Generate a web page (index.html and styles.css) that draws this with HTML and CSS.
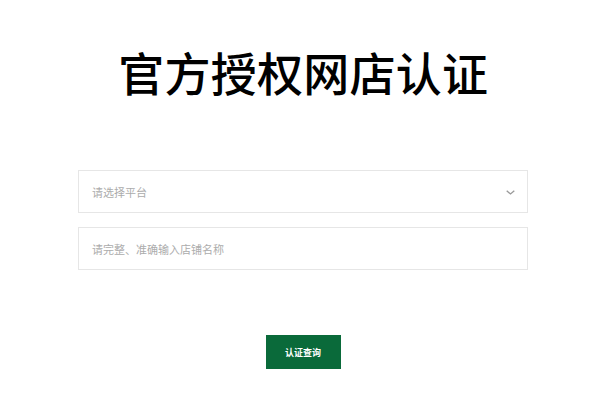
FILE: index.html
```html
<!DOCTYPE html>
<html lang="zh-CN">
<head>
<meta charset="utf-8">
<title>官方授权网店认证</title>
<link rel="stylesheet" href="styles.css">
</head>
<body>
<main class="page">
  <h1 class="title">官方授权网店认证</h1>
  <form class="form">
    <div class="field select">
      <span class="placeholder">请选择平台</span>
      <svg class="chevron" width="9" height="5" viewBox="0 0 9 5"><path d="M0.7 0.7 L4.5 4 L8.3 0.7" fill="none" stroke="#9a9a9a" stroke-width="1.3"/></svg>
    </div>
    <div class="field">
      <span class="placeholder">请完整、准确输入店铺名称</span>
    </div>
    <div class="actions">
      <button type="button" class="btn">认证查询</button>
    </div>
  </form>
</main>
</body>
</html>
```
FILE: styles.css
```css
html, body {
  margin: 0;
  padding: 0;
  background: #ffffff;
}
body {
  font-family: "Noto Sans CJK SC", "Noto Sans", sans-serif;
}
.page {
  width: 450px;
  margin-left: 78px;
  padding-top: 38px;
}
.title {
  margin: 0;
  text-align: center;
  font-size: 46px;
  line-height: 66px;
  font-weight: 500;
  letter-spacing: 0.25px;
  text-indent: 0.5px;
  color: #000;
}
.form {
  margin-top: 66px;
  display: flex;
  flex-direction: column;
  gap: 14px;
}
.field {
  box-sizing: border-box;
  height: 43px;
  border: 1px solid #e6e6e6;
  display: flex;
  align-items: center;
  justify-content: space-between;
  padding: 0 12px 0 13px;
}
.placeholder {
  font-size: 11px;
  color: #acacac;
}
.chevron {
  display: block;
  margin-top: 2px;
}
.actions {
  display: flex;
  justify-content: center;
  margin-top: 51px;
}
.btn {
  width: 75px;
  height: 34px;
  border: 0;
  background: #0a6a3a;
  color: #fff;
  font-family: "Noto Sans CJK SC", sans-serif;
  font-size: 9px;
  font-weight: 700;
  padding: 0;
}
```
